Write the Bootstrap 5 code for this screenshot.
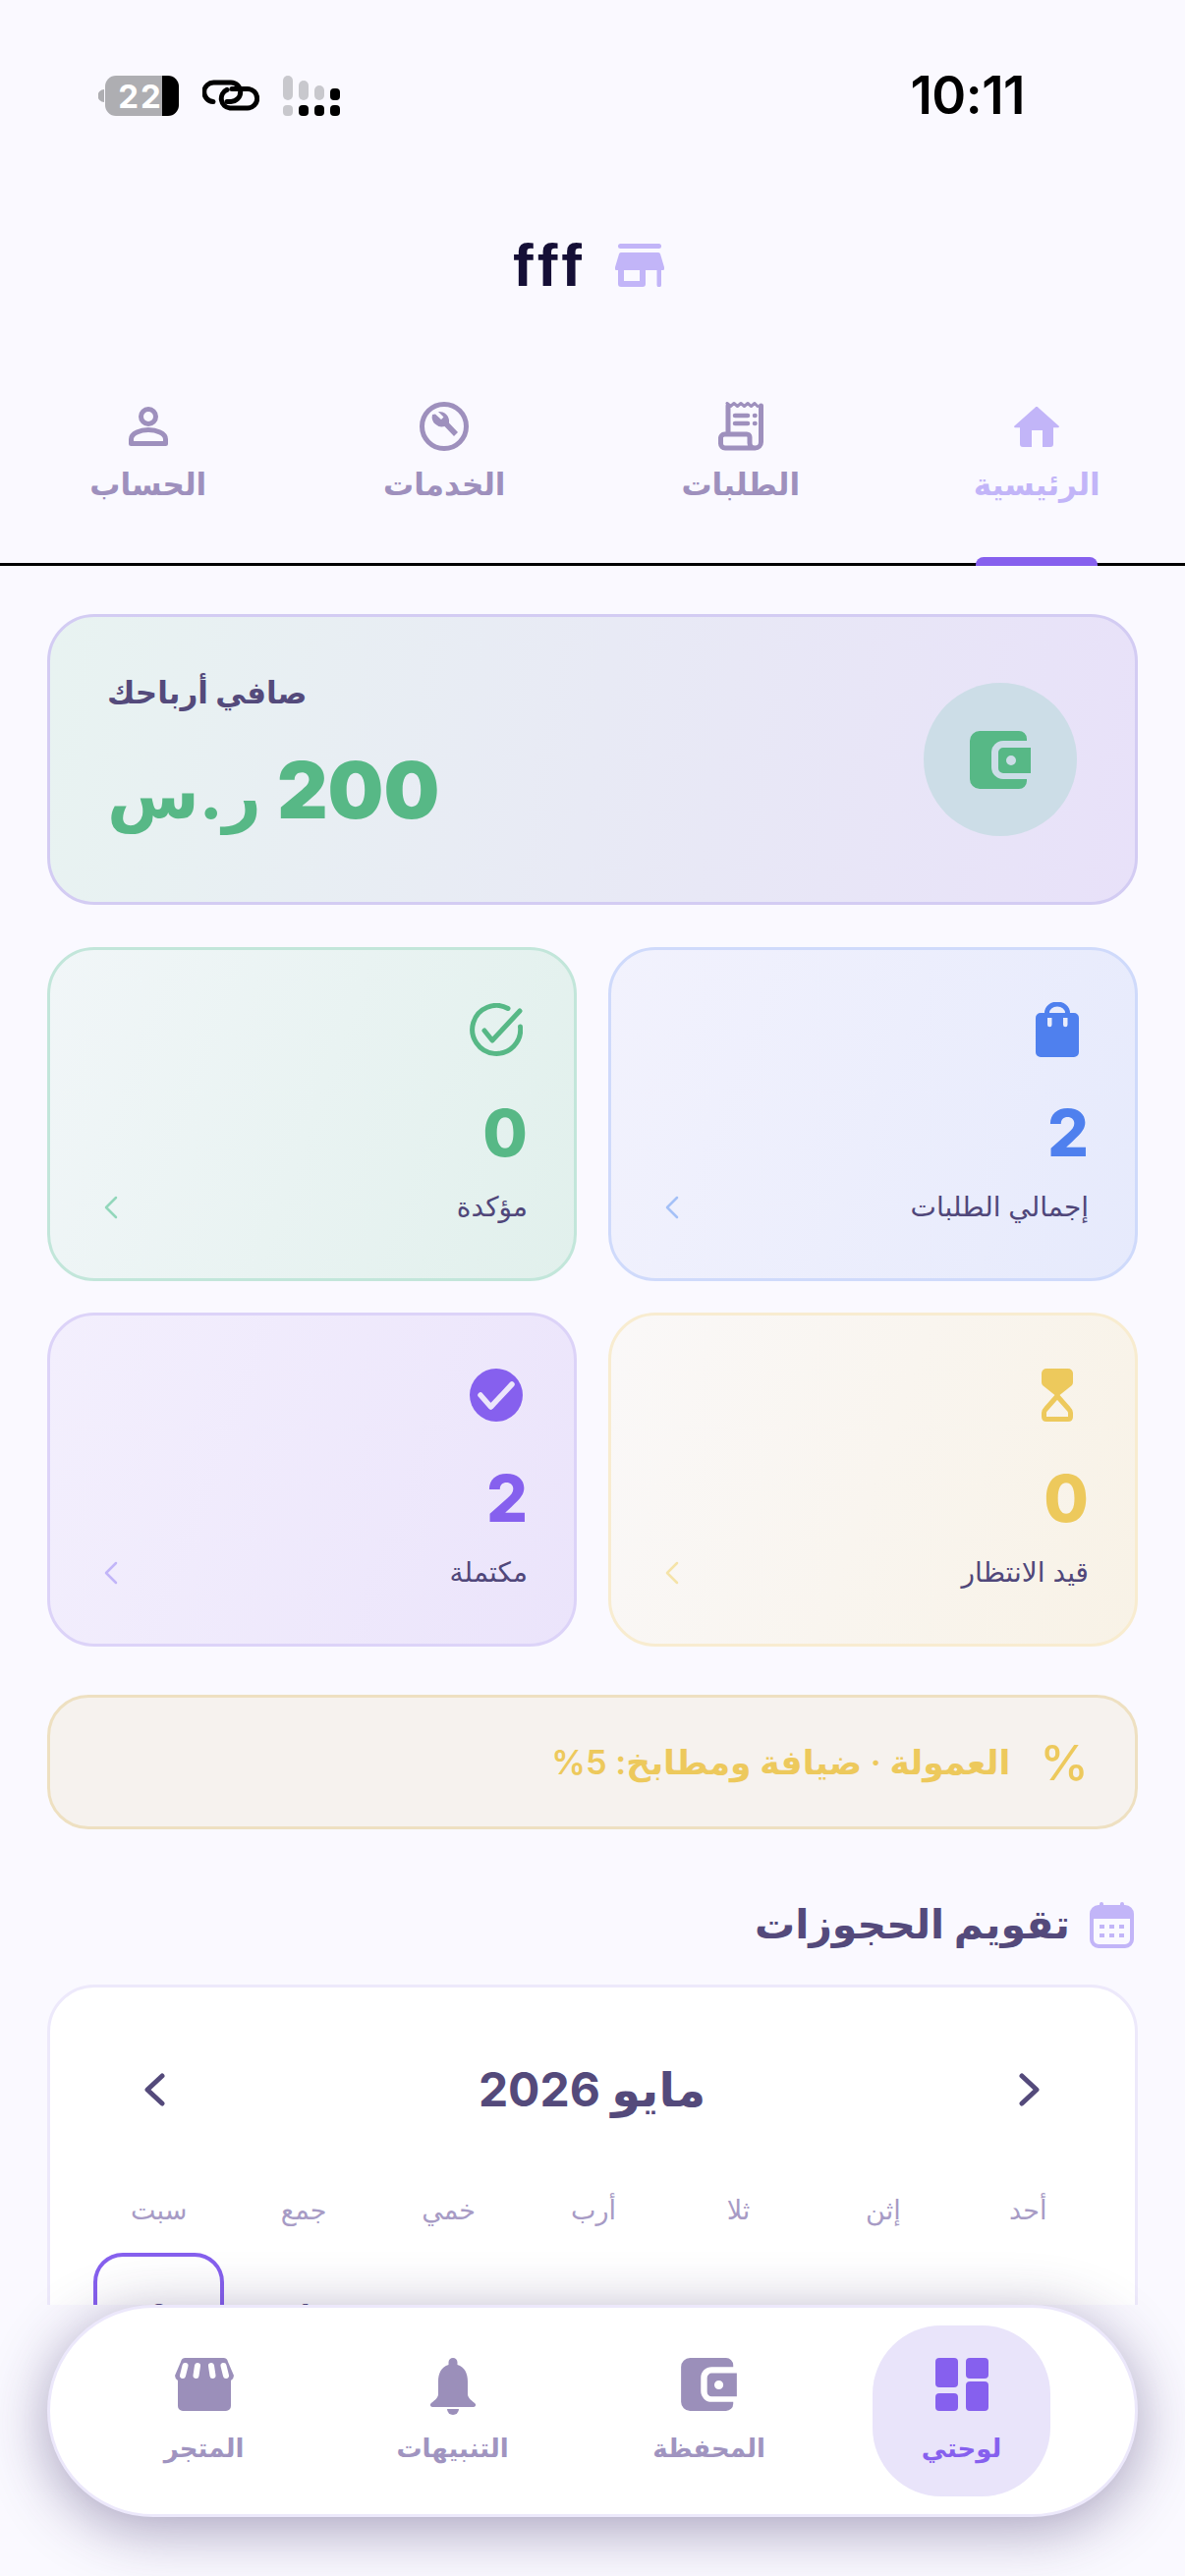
<!DOCTYPE html>
<html lang="ar" dir="rtl">

<head>
    <meta charset="UTF-8">
    <meta name="viewport" content="width=device-width, initial-scale=1.0">
    <title>لوحتي</title>
    <link href="https://cdn.jsdelivr.net/npm/bootstrap@5.3.0/dist/css/bootstrap.min.css" rel="stylesheet">
    <style>
        html, body { height: 2622px; overflow: hidden; }
        body { background: #faf9ff; font-family: Inter, "DejaVu Sans", sans-serif; color: #544a7b; position: relative; }
        svg { display: block; }

        .page-clip { height: 2346px; overflow: hidden; }

        .status-strip { height: 135px; padding: 77px 163px 0 100px; }
        .clock { font: 600 53px/41px Inter, sans-serif; color: #000; letter-spacing: -.5px; }
        .store-head { height: 270px; gap: 30px; padding-right: 8px; }
        .store-name { font: 700 62px/1 "Liberation Sans", sans-serif; letter-spacing: 4px; color: #150f36; }

        .top-tabs { height: 171px; border-bottom: 3px solid #000; padding-top: 4px; }
        .top-tab { position: relative; color: #9e90bd; font-size: 31px; font-weight: 600; line-height: 40px; }
        .top-tab.is-on { color: #c2b5f8; }
        .tab-ico { height: 50px; margin-bottom: 14px; }
        .tab-mark { position: absolute; bottom: -3px; left: 50%; width: 124px; height: 9px; margin-left: -62px; background: #8660ee; border-radius: 8px 8px 0 0; }

        .content-wrap { padding: 49px 48px 0; }

        .hero-box { height: 296px; border: 3px solid #d3ccf3; border-radius: 48px; background: linear-gradient(100deg, #e8f3f1, #e8e1f9); padding: 0 59px 0 58px; }
        .hero-round { width: 156px; height: 156px; border-radius: 50%; background: #ccdde7; }
        .hero-label { font-size: 31px; font-weight: 700; line-height: 40px; margin-bottom: 34px; margin-top: -8px; }
        .hero-sum { font-size: 80px; font-weight: 900; line-height: 90px; color: #57b886; }
        .hero-unit { font-size: 68px; font-weight: 800; }

        .stat-grid { display: grid; grid-template-columns: 1fr 1fr; gap: 32px; margin-top: 43px; }
        .stat-box { height: 340px; border: 3px solid; border-radius: 48px; padding: 49px 47px 0 55px; }
        .stat-ico { width: 64px; height: 64px; }
        .stat-num { font-size: 66px; font-weight: 800; line-height: 80px; margin-top: 33px; }
        .stat-label { font-size: 28px; line-height: 40px; color: #50477a; margin-top: 15px; }
        .tone-blue { background: linear-gradient(110deg, #f2f2fd, #e6eafc); border-color: #cfdafb; color: #4f80ee; }
        .tone-green { background: linear-gradient(110deg, #f1f6f8, #e1f0ec); border-color: #c2e6da; color: #57b886; }
        .tone-amber { background: linear-gradient(110deg, #faf8f8, #f8f2e6); border-color: #f8ecd0; color: #edc95c; }
        .tone-violet { background: linear-gradient(110deg, #f3effd, #ebe4fb); border-color: #dcd3f8; color: #8660ee; }

        .fee-box { height: 137px; margin-top: 49px; border: 3px solid #eee0c1; border-radius: 42px; background: #f6f2ee; color: #edc95c; padding: 0 47px; gap: 30px; font-size: 34.5px; font-weight: 600; }
        .fee-sign { font-size: 50px; font-weight: 500; line-height: 1; }

        .cal-head { height: 158px; padding-top: 36px; gap: 20px; font-size: 41px; font-weight: 700; padding-right: 4px; }
        .cal-box { background: #fff; border: 3px solid #ede9fb; border-radius: 48px; padding: 76px 42px 0 44px; height: 600px; }
        .cal-nav { padding: 0 54px 0 51px; height: 56px; font-size: 48px; font-weight: 700; margin-bottom: 75px; }
        .cal-grid { display: grid; grid-template-columns: repeat(7, 1fr); column-gap: 14px; }
        .cal-day { text-align: center; font-size: 27px; line-height: 40px; color: #a79bc5; }
        .cal-cell { height: 134px; margin-top: 23px; padding-bottom: 8px; border-radius: 30px; font-size: 30px; font-weight: 600; color: #544a7b; text-align: center; }
        .cal-cell.is-today { border: 4px solid #8660ee; }

        .dock { position: absolute; left: 48px; right: 48px; top: 2346px; height: 216px; background: #fff; border: 3px solid #ece8fb; border-radius: 108px; padding: 18px 48px 0 29px; box-shadow: 0 12px 60px rgba(50, 35, 95, .42); }
        .dock-cell { width: 257px; height: 174px; padding-top: 33px; color: #a094c0; font-size: 26px; font-weight: 600; }
        .dock-cell.is-on { width: 181px; margin: 0 38px; border-radius: 70px; background: #e9e4fa; color: #8660ee; }
        .dock-cell.is-bell { width: 265px; }
        .dock-cell.is-shop { width: 241px; }
        .dock-ico { height: 58px; margin-bottom: 14px; }
    </style>
</head>

<body>
    <svg width="0" height="0" class="position-absolute">
        <symbol id="wallet-shape" viewBox="0 0 62 59">
            <path fill="currentColor" d="M10 0H50a8 8 0 0 1 8 8v2H34a12 12 0 0 0-12 12v15a12 12 0 0 0 12 12H58v2a8 8 0 0 1-8 8H10A10 10 0 0 1 0 49V10A10 10 0 0 1 10 0Z" />
            <path fill="currentColor" fill-rule="evenodd" d="M34 17H62V43H34a5 5 0 0 1-5-5V22a5 5 0 0 1 5-5ZM42 25a5 5 0 1 0 0 10a5 5 0 1 0 0-10Z" />
        </symbol>
        <symbol id="chev-left" viewBox="0 0 14 24">
            <path fill="none" stroke="currentColor" stroke-width="2.5" stroke-linecap="round" stroke-linejoin="round" d="M12 2 2 12l10 10" />
        </symbol>
    </svg>

    <div class="page-clip">
        <!-- Status bar -->
        <div class="status-strip d-flex justify-content-between" dir="ltr">
            <div class="d-flex align-items-start">
                <svg width="82" height="41" viewBox="0 0 82 41">
                    <path fill="#aeaeb2" d="M6 14a4 4 0 0 0 0 13Z" />
                    <path fill="#aeaeb2" d="M18 0H65V41H18A11 11 0 0 1 7 30V11A11 11 0 0 1 18 0Z" />
                    <path fill="#000" d="M65 0H71A11 11 0 0 1 82 11V30A11 11 0 0 1 71 41H65Z" />
                    <text x="43" y="33" text-anchor="middle" font-family="Inter, sans-serif" font-weight="700" font-size="33" fill="#fff" letter-spacing="2">22</text>
                </svg>
                <svg class="ms-4 mt-1" width="58" height="32" viewBox="0 0 58 32" fill="none" stroke="#000" stroke-width="5" stroke-linecap="round">
                    <path d="M11 22.5A9.7 9.7 0 0 1 12 3H29a9.7 9.7 0 0 1 0 19.4H25" />
                    <path d="M30 9.5H46a9.7 9.7 0 0 1 0 19.4H28a9.7 9.7 0 0 1-3-18.5" />
                </svg>
                <svg class="ms-4" width="58" height="41" viewBox="0 0 58 41">
                    <rect x="0" y="0" width="10" height="25" rx="5" fill="#c8c8cd" />
                    <rect x="16" y="5" width="10" height="20" rx="5" fill="#c8c8cd" />
                    <rect x="32" y="10" width="10" height="15" rx="5" fill="#c8c8cd" />
                    <rect x="48" y="13" width="10" height="12" rx="4" fill="#000" />
                    <rect x="0" y="30" width="10" height="11" rx="4" fill="#c8c8cd" />
                    <rect x="16" y="30" width="10" height="11" rx="4" fill="#000" />
                    <rect x="32" y="30" width="10" height="11" rx="4" fill="#000" />
                    <rect x="48" y="30" width="10" height="11" rx="4" fill="#000" />
                </svg>
            </div>
            <div class="clock">10:11</div>
        </div>

        <!-- Store title -->
        <div class="store-head d-flex align-items-center justify-content-center">
            <svg width="50" height="44" viewBox="0 0 50 44" fill="#c2b5f8">
                <rect x="3" y="0" width="44" height="5" rx="2.5" />
                <path fill-rule="evenodd" d="M6 9H44a2 2 0 0 1 2 1.5L50 24a2 2 0 0 1-2 3H47V42a2 2 0 0 1-4.500 0V27H31V41a3 3 0 0 1-3 3H6a3 3 0 0 1-3-3V27H2a2 2 0 0 1-2-3L4 10.500A2 2 0 0 1 6 9ZM9 27V38H25V27Z" />
            </svg>
            <div class="store-name" dir="ltr">fff</div>
        </div>

        <!-- Top tabs -->
        <div class="top-tabs row g-0">
            <div class="col-3 top-tab is-on d-flex flex-column align-items-center">
                <div class="tab-ico d-flex align-items-center">
                    <svg width="46" height="41" viewBox="0 0 46 41" fill="#c2b5f8">
                        <path d="M21.500.7a2 2 0 0 1 3 0L45.500 19.500a1 1 0 0 1-.5 1.800H40V38a3 3 0 0 1-3 3H29V24H18V41H9a3 3 0 0 1-3-3V21.300H1a1 1 0 0 1-.5-1.800Z" />
                    </svg>
                </div>
                <div>الرئيسية</div>
                <span class="tab-mark"></span>
            </div>
            <div class="col-3 top-tab d-flex flex-column align-items-center">
                <div class="tab-ico">
                    <svg width="46" height="50" viewBox="0 0 46 50" fill="none" stroke="#9e90bd" stroke-width="5" stroke-linejoin="round" stroke-linecap="round">
                        <path stroke-width="3" d="M9 1.500l3.500 3 3.500-3 3.500 3 3.500-3 3.500 3 3.500-3 3.500 3 3.500-3 3 3" />
                        <path d="M10 4V33M43.500 4V41a6 6 0 0 1-6 6H7a4.500 4.500 0 0 1-4.500-4.500V37.500A4 4 0 0 1 6.500 33H29a3 3 0 0 1 3 3V42a5 5 0 0 0 5 5" />
                        <path stroke-width="4.500" d="M17 14H30M17 22H30M37 14h.5M37 22h.5" />
                    </svg>
                </div>
                <div>الطلبات</div>
            </div>
            <div class="col-3 top-tab d-flex flex-column align-items-center">
                <div class="tab-ico">
                    <svg width="50" height="50" viewBox="0 0 50 50">
                        <circle cx="25" cy="25" r="22.500" fill="none" stroke="#9e90bd" stroke-width="5" />
                        <path fill="#9e90bd" d="M16 12.500l6 5.500 2.500-2.500-5.500-5.500a10 10 0 0 1 11 11.500l9 9.500-4 4-9.500-10A10 10 0 0 1 13 13Z" />
                    </svg>
                </div>
                <div>الخدمات</div>
            </div>
            <div class="col-3 top-tab d-flex flex-column align-items-center">
                <div class="tab-ico d-flex align-items-center">
                    <svg width="40" height="40" viewBox="0 0 40 40" fill="none" stroke="#9e90bd" stroke-width="5" stroke-linejoin="round">
                        <circle cx="20" cy="10" r="7.500" />
                        <path d="M2.500 37.500V33C2.500 27 12 23.500 20 23.500S37.500 27 37.500 33V37.500Z" />
                    </svg>
                </div>
                <div>الحساب</div>
            </div>
        </div>

        <main class="content-wrap">
            <!-- Net earnings -->
            <section class="hero-box d-flex align-items-center justify-content-between">
                <div class="hero-round d-flex align-items-center justify-content-center" style="color:#57b886">
                    <svg width="62" height="59"><use href="#wallet-shape" /></svg>
                </div>
                <div class="d-flex flex-column align-items-end">
                    <div class="hero-label">صافي أرباحك</div>
                    <div class="hero-sum">200 <span class="hero-unit">ر.س</span></div>
                </div>
            </section>

            <!-- Order counts -->
            <section class="stat-grid">
                <div class="stat-box tone-blue">
                    <div class="stat-ico d-flex align-items-center justify-content-center">
                        <svg width="44" height="56" viewBox="0 0 44 56" fill="#4f80ee">
                            <path fill="none" stroke="#4f80ee" stroke-width="5" d="M11.500 14V11a10.500 9 0 0 1 21 0V14" />
                            <path fill-rule="evenodd" d="M5 11H39a5 5 0 0 1 5 5V51a5 5 0 0 1-5 5H5a5 5 0 0 1-5-5V16a5 5 0 0 1 5-5ZM12 16V23a2 2 0 0 0 4.500 0V16ZM28 16V23a2 2 0 0 0 4.500 0V16Z" />
                        </svg>
                    </div>
                    <div class="stat-num">2</div>
                    <div class="d-flex justify-content-between align-items-center">
                        <div class="stat-label">إجمالي الطلبات</div>
                        <svg class="mt-3" width="14" height="24" style="color:#a5c1f7"><use href="#chev-left" /></svg>
                    </div>
                </div>
                <div class="stat-box tone-green">
                    <div class="stat-ico d-flex align-items-center justify-content-center">
                        <svg width="54" height="54" viewBox="0 0 54 54" fill="none" stroke="#57b886" stroke-width="5" stroke-linecap="round" stroke-linejoin="round">
                            <path d="M39 5.500A24.500 24.500 0 1 0 51.500 24" />
                            <path d="M15 28l8 10L51 8" />
                        </svg>
                    </div>
                    <div class="stat-num">0</div>
                    <div class="d-flex justify-content-between align-items-center">
                        <div class="stat-label">مؤكدة</div>
                        <svg class="mt-3" width="14" height="24" style="color:#93d7bb"><use href="#chev-left" /></svg>
                    </div>
                </div>
                <div class="stat-box tone-amber">
                    <div class="stat-ico d-flex align-items-center justify-content-center">
                        <svg width="32" height="54" viewBox="0 0 32 54">
                            <path fill="#edc95c" d="M5 0H27a5 5 0 0 1 5 5V14a5 5 0 0 1-1 3L16 29 1 17a5 5 0 0 1-1-3V5A5 5 0 0 1 5 0Z" />
                            <path fill="none" stroke="#edc95c" stroke-width="5" stroke-linejoin="round" d="M16 28L27.500 41Q29.500 43 29.500 45V49Q29.500 51.500 27 51.500H5Q2.500 51.500 2.500 49V45Q2.500 43 4.500 41Z" />
                        </svg>
                    </div>
                    <div class="stat-num">0</div>
                    <div class="d-flex justify-content-between align-items-center">
                        <div class="stat-label">قيد الانتظار</div>
                        <svg class="mt-3" width="14" height="24" style="color:#f5e3a8"><use href="#chev-left" /></svg>
                    </div>
                </div>
                <div class="stat-box tone-violet">
                    <div class="stat-ico d-flex align-items-center justify-content-center">
                        <svg width="54" height="54" viewBox="0 0 54 54">
                            <circle cx="27" cy="27" r="27" fill="#8660ee" />
                            <path fill="none" stroke="#ece6fb" stroke-width="5.500" stroke-linecap="round" stroke-linejoin="round" d="M11 27l10.500 12L43 16" />
                        </svg>
                    </div>
                    <div class="stat-num">2</div>
                    <div class="d-flex justify-content-between align-items-center">
                        <div class="stat-label">مكتملة</div>
                        <svg class="mt-3" width="14" height="24" style="color:#c2b5f8"><use href="#chev-left" /></svg>
                    </div>
                </div>
            </section>

            <!-- Commission note -->
            <section class="fee-box d-flex align-items-center">
                <span class="fee-sign">%</span>
                <span>العمولة · ضيافة ومطابخ: 5%</span>
            </section>

            <!-- Bookings calendar -->
            <div class="cal-head d-flex align-items-center">
                <svg width="45" height="47" viewBox="0 0 45 47">
                    <rect x="2" y="5" width="41" height="40" rx="7" fill="none" stroke="#c2b5f8" stroke-width="4" />
                    <path fill="#c2b5f8" d="M9 4H36a7 7 0 0 1 7 7v6H2V11A7 7 0 0 1 9 4Z" />
                    <rect x="10" y="0" width="4" height="8" rx="2" fill="#c2b5f8" />
                    <rect x="31" y="0" width="4" height="8" rx="2" fill="#c2b5f8" />
                    <g fill="#c2b5f8">
                        <rect x="10" y="23" width="5" height="4" /><rect x="20" y="23" width="5" height="4" /><rect x="30" y="23" width="5" height="4" />
                        <rect x="10" y="32" width="5" height="4" /><rect x="20" y="32" width="5" height="4" /><rect x="30" y="32" width="5" height="4" />
                    </g>
                </svg>
                <span>تقويم الحجوزات</span>
            </div>

            <section class="cal-box">
                <div class="cal-nav d-flex align-items-center justify-content-between">
                    <svg width="22" height="34" viewBox="0 0 22 34" fill="none" stroke="#544a7b" stroke-width="5" stroke-linecap="round" stroke-linejoin="round"><path d="M3 3l15 14L3 31" /></svg>
                    <span>مايو 2026</span>
                    <svg width="22" height="34" viewBox="0 0 22 34" fill="none" stroke="#544a7b" stroke-width="5" stroke-linecap="round" stroke-linejoin="round"><path d="M19 3 4 17l15 14" /></svg>
                </div>
                <div class="cal-grid" id="cal-days"></div>
            </section>
        </main>
    </div>

    <!-- Floating bottom bar -->
    <nav class="dock d-flex">
        <div class="dock-cell is-on d-flex flex-column align-items-center">
            <div class="dock-ico">
                <svg width="54" height="54" viewBox="0 0 54 54" fill="#8660ee">
                    <rect x="0" y="0" width="23" height="30" rx="4" />
                    <rect x="31" y="0" width="23" height="21" rx="4" />
                    <rect x="0" y="36" width="23" height="18" rx="4" />
                    <rect x="31" y="24" width="23" height="30" rx="4" />
                </svg>
            </div>
            <div>لوحتي</div>
        </div>
        <div class="dock-cell d-flex flex-column align-items-center">
            <div class="dock-ico" style="color:#9b8fba">
                <svg width="57" height="54"><use href="#wallet-shape" /></svg>
            </div>
            <div>المحفظة</div>
        </div>
        <div class="dock-cell is-bell d-flex flex-column align-items-center">
            <div class="dock-ico">
                <svg width="46" height="58" viewBox="0 0 46 58" fill="#9b8fba">
                    <path d="M23 0a4.500 4.500 0 0 1 4.500 4.500V7C35 9 38 16 38 24V37C38 41 43 44 46 47a2.500 2.500 0 0 1-2 3H2a2.500 2.500 0 0 1-2-3C3 44 8 41 8 37V24C8 16 11 9 18.500 7V4.500A4.500 4.500 0 0 1 23 0Z" />
                    <path d="M17 52H29a6 6 0 0 1-12 0Z" />
                </svg>
            </div>
            <div>التنبيهات</div>
        </div>
        <div class="dock-cell is-shop d-flex flex-column align-items-center">
            <div class="dock-ico">
                <svg width="60" height="54" viewBox="0 0 60 54">
                    <path fill="#9b8fba" d="M11 0H49a5 5 0 0 1 5 4L60 18a6 6 0 0 1-3 5V49a5 5 0 0 1-5 5H8a5 5 0 0 1-5-5V23a6 6 0 0 1-3-5L6 4a5 5 0 0 1 5-4Z" />
                    <g fill="none" stroke="#fff" stroke-width="6" stroke-linecap="round">
                        <path d="M10.500 8 8 18M23 8 21.500 18M37 8 38.500 18M49.500 8 52 18" />
                    </g>
                </svg>
            </div>
            <div>المتجر</div>
        </div>
    </nav>

    <script>
        // Week starts on Sunday, May 2026 opens on a Friday
        const days = ['أحد', 'إثن', 'ثلا', 'أرب', 'خمي', 'جمع', 'سبت'];
        const grid = document.getElementById('cal-days');

        days.forEach(name => {
            grid.innerHTML += `<div class="cal-day">${name}</div>`;
        });

        for (let i = 0; i < 5; i++) grid.innerHTML += '<div class="cal-cell"></div>';
        grid.innerHTML += '<div class="cal-cell d-flex align-items-center justify-content-center">1</div>';
        grid.innerHTML += '<div class="cal-cell is-today d-flex align-items-center justify-content-center">2</div>';
    </script>
    <script src="https://cdn.jsdelivr.net/npm/bootstrap@5.3.0/dist/js/bootstrap.bundle.min.js"></script>
</body>

</html>
